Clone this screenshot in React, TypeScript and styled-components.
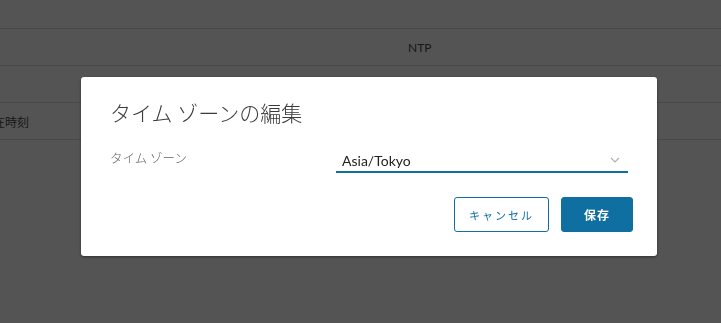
import styled, { createGlobalStyle } from "styled-components"

const GlobalStyle = createGlobalStyle`
  html, body {
    margin: 0;
    padding: 0;
    background: #fff;
    overflow: hidden;
  }
  body {
    font-family: "Noto Sans CJK JP", "Noto Sans", sans-serif;
    color: #333;
  }
`

const Page = styled.div`
  width: 721px;
  height: 323px;
  overflow: hidden;
`

const Table = styled.div`
  margin-top: -8px;
  margin-left: -19px;
  width: 760px;
`

const Row = styled.div`
  display: flex;
  align-items: center;
  height: 36px;
  border-bottom: 1px solid #dcdcdc;
  font-size: 12px;
  color: #4a4a4a;
`

const KeyCell = styled.div`
  width: 427px;
  white-space: nowrap;
`

const ValueCell = styled.div`
  font-family: "Lato", "Noto Sans", sans-serif;
`

const Backdrop = styled.div`
  position: fixed;
  inset: 0;
  background: rgba(0, 0, 0, 0.67);
  display: flex;
  justify-content: center;
  align-items: flex-start;
  padding: 77px 0 0 17px;
`

const Modal = styled.div`
  width: 576px;
  background: #fff;
  border-radius: 3px;
  box-shadow: 0 1px 3px rgba(0, 0, 0, 0.45);
`

const Header = styled.div`
  padding: 20px 29px 0;
`

const Title = styled.h3`
  margin: 0;
  font-size: 21px;
  line-height: 30px;
  font-weight: 300;
  color: #3a3a3a;
`

const Body = styled.div`
  margin-top: 22px;
  padding: 0 29px;
`

const FormRow = styled.div`
  display: flex;
  align-items: flex-start;
`

const Label = styled.label`
  width: 226px;
  font-size: 12.5px;
  line-height: 18px;
  font-weight: 300;
  color: #666;
`

const Select = styled.div`
  width: 292px;
  height: 24px;
  box-sizing: border-box;
  border-bottom: 2px solid #0f6fa0;
  display: flex;
  align-items: center;
  justify-content: space-between;
  padding: 0 6px;
`

const SelectValue = styled.span`
  font-family: "Lato", "Noto Sans", sans-serif;
  font-size: 14px;
  color: #222;
`

const Chevron = styled.svg`
  width: 10px;
  height: 6px;
  margin-right: 2px;
`

const Footer = styled.div`
  display: flex;
  justify-content: flex-end;
  gap: 12px;
  padding: 24px 24px 24px 0;
`

const Button = styled.button<{ $primary?: boolean }>`
  height: 35px;
  min-width: 72px;
  padding: 0 14px;
  border-radius: 3px;
  border: 1px solid #0f6fa0;
  background: ${(p) => (p.$primary ? "#0f6fa0" : "#fff")};
  color: ${(p) => (p.$primary ? "#fff" : "#0f6fa0")};
  font-family: "Noto Sans CJK JP", sans-serif;
  font-size: ${(p) => (p.$primary ? "12px" : "11px")};
  font-weight: ${(p) => (p.$primary ? 700 : 400)};
  letter-spacing: ${(p) => (p.$primary ? "0.08em" : "0.18em")};
  cursor: pointer;
`

const App = () => {
  return (
    <Page>
      <GlobalStyle />
      <Table>
        <Row />
        <Row>
          <KeyCell />
          <ValueCell>NTP</ValueCell>
        </Row>
        <Row>
          <KeyCell>ン</KeyCell>
          <ValueCell>Asia/Tokyo</ValueCell>
        </Row>
        <Row>
          <KeyCell>現在時刻</KeyCell>
          <ValueCell>2023/01/01 12:00</ValueCell>
        </Row>
      </Table>

      <Backdrop>
        <Modal>
          <Header>
            <Title>タイム ゾーンの編集</Title>
          </Header>
          <Body>
            <FormRow>
              <Label>タイム ゾーン</Label>
              <Select>
                <SelectValue>Asia/Tokyo</SelectValue>
                <Chevron viewBox="0 0 10 6">
                  <path d="M1 1 L5 5 L9 1" fill="none" stroke="#b0b0b0" strokeWidth="1.2" />
                </Chevron>
              </Select>
            </FormRow>
          </Body>
          <Footer>
            <Button>キャンセル</Button>
            <Button $primary>保存</Button>
          </Footer>
        </Modal>
      </Backdrop>
    </Page>
  )
}

export default App
